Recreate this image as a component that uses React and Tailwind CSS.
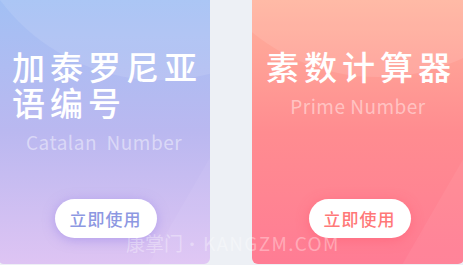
import React from 'react';

const font = { fontFamily: '"Noto Sans CJK SC", "Noto Sans", sans-serif' };

const Card = ({ bg, circle, lines, subtitle, btnColor, btnShadow }) => (
  <div className={`relative w-[212px] h-[264px] shrink-0 overflow-hidden rounded-b-[6px] ${bg} flex flex-col`}>
    {/* decor */}
    <div className={`absolute rounded-full bg-white/10 ${circle}`} />
    <div className="absolute left-[150px] top-[170px] w-[260px] h-[260px] rotate-[30deg] bg-white/5" />
    <div className="relative pt-[48px] pl-[14px] text-white text-[33px] leading-[36px] tracking-[5px] font-medium whitespace-nowrap">
      {lines.map((l) => (
        <div key={l}>{l}</div>
      ))}
    </div>
    <div className="relative mt-[10px] text-center text-white/45 text-[19px] leading-[24px] tracking-[0.5px] whitespace-pre">
      {subtitle}
    </div>
    <div className="relative mt-auto mb-[26px] flex justify-center pl-[3px]">
      <button className={`w-[102px] h-[39px] rounded-full bg-white text-[17px] tracking-[1px] font-medium ${btnColor} ${btnShadow}`}>
        立即使用
      </button>
    </div>
  </div>
);

export default function App() {
  return (
    <div className="relative w-[463px] h-[265px] overflow-hidden bg-[#edf0f5]" style={font}>
      <div className="flex gap-[42px] -ml-[2px]">
        <Card
          bg="bg-gradient-to-b from-[#a2c0f4] via-[#bab8f0] to-[#dec4f3]"
          circle="left-[-38px] top-[-320px] w-[400px] h-[400px]"
          lines={['加泰罗尼亚', '语编号']}
          subtitle="Catalan  Number"
          btnColor="text-[#8d98e2]"
          btnShadow="shadow-[0_2px_12px_rgba(150,130,230,0.55)]"
        />
        <Card
          bg="bg-gradient-to-b from-[#ffb29c] via-[#ff8c90] to-[#ff7c94]"
          circle="left-[-74px] top-[-323px] w-[400px] h-[400px]"
          lines={['素数计算器']}
          subtitle="Prime Number"
          btnColor="text-[#ff7878]"
          btnShadow="shadow-[0_2px_12px_rgba(255,90,110,0.5)]"
        />
      </div>
      <div className="absolute left-[126px] top-[231px] flex items-center text-[19px] leading-[24px] text-white/35 whitespace-pre">
        <span>康掌门</span>
        <span className="ml-[5px] w-[8px] flex justify-center text-[16px] overflow-visible">•</span>
        <span className="ml-[7px] tracking-[1.3px]">KANGZM.COM</span>
      </div>
    </div>
  );
}
